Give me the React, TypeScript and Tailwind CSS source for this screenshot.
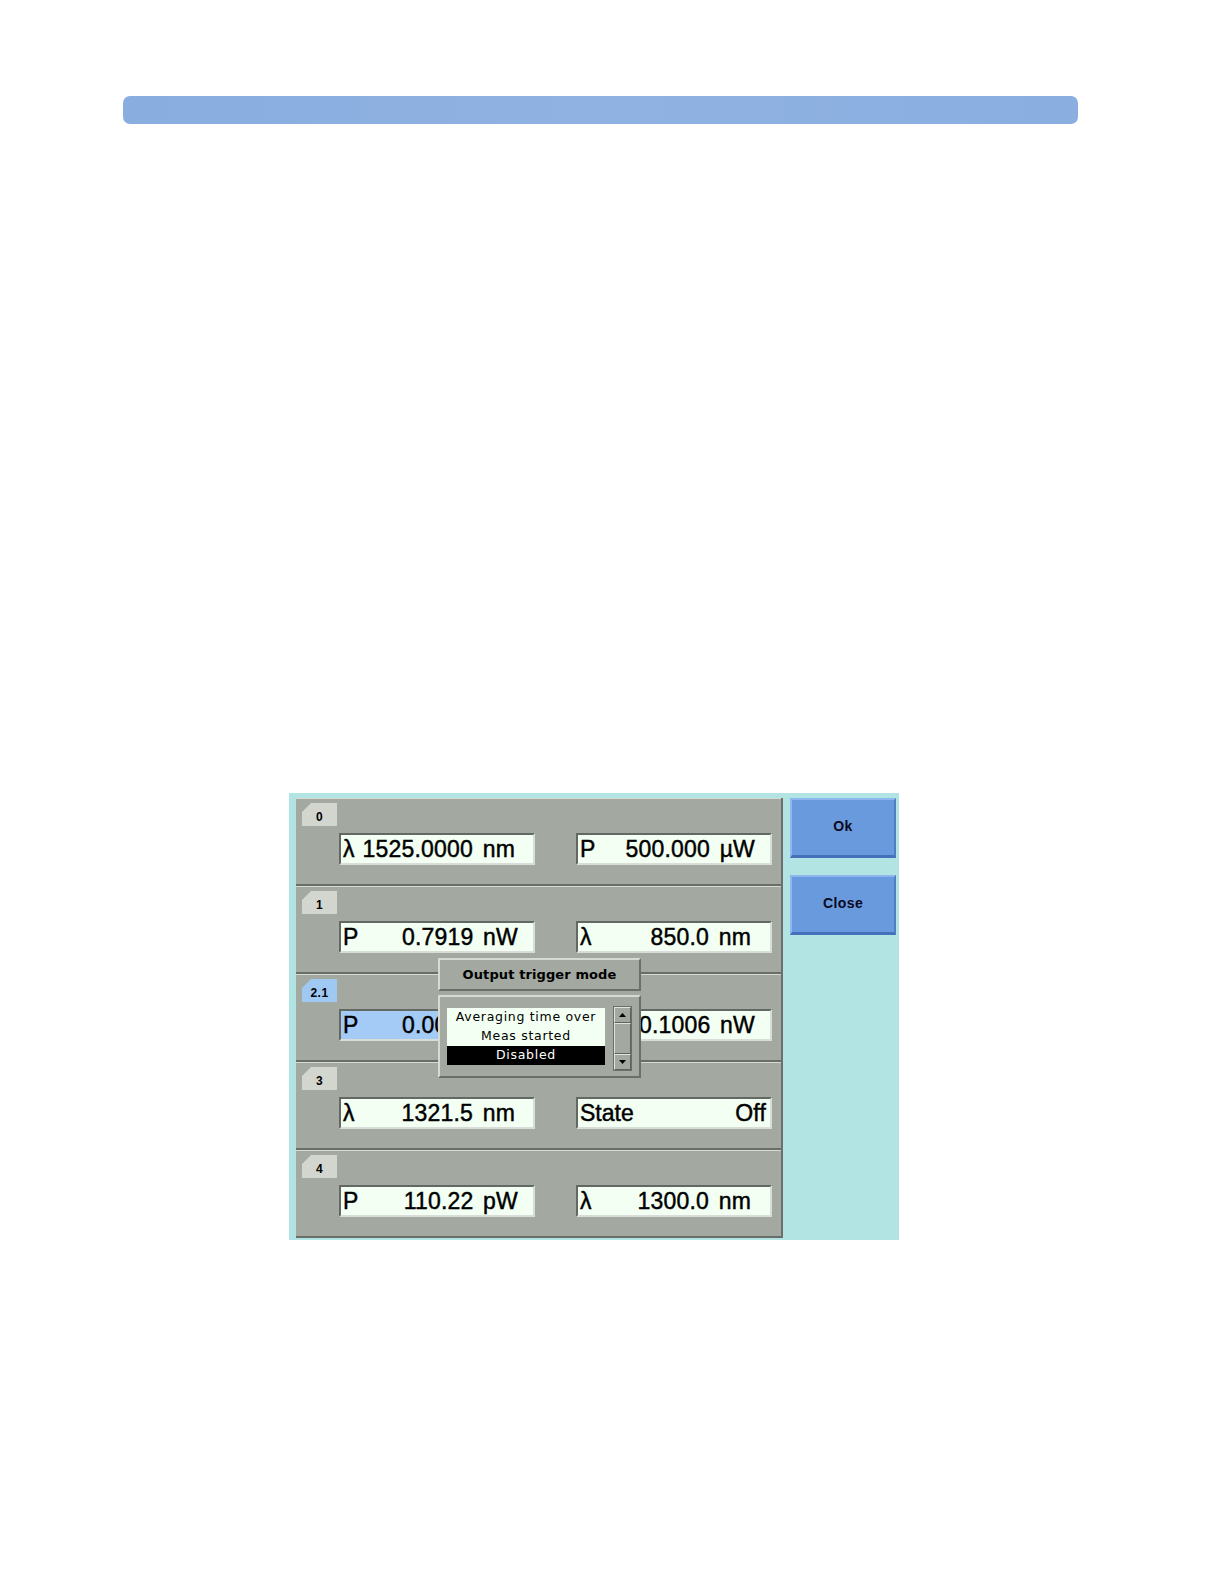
import React from 'react';

type Field = { label: string; value: string; pr?: string; active?: boolean };
type Row = { tab: string; active?: boolean; left: Field; right: Field };

const rows: Row[] = [
  { tab: '0', left: { label: 'λ', value: '1525.0000 nm', pr: 'pr-[18px]' }, right: { label: 'P', value: '500.000 µW' } },
  { tab: '1', left: { label: 'P', value: '0.7919 nW' }, right: { label: 'λ', value: '850.0 nm', pr: 'pr-[19px]' } },
  { tab: '2.1', active: true, left: { label: 'P', value: '0.0012 nW', active: true }, right: { label: 'P', value: '0.1006 nW' } },
  { tab: '3', left: { label: 'λ', value: '1321.5 nm', pr: 'pr-[18px]' }, right: { label: 'State', value: 'Off', pr: 'pr-[4px]' } },
  { tab: '4', left: { label: 'P', value: '110.22 pW' }, right: { label: 'λ', value: '1300.0 nm', pr: 'pr-[19px]' } },
];

function ValueField({ f }: { f: Field }) {
  return (
    <div
      className={
        'w-[196px] h-[32px] flex items-center justify-between pl-[2px] border-t-2 border-l-2 border-t-[#646862] border-l-[#646862] border-b-2 border-r-2 border-b-[#d9ddd7] border-r-[#d9ddd7] text-[23px] leading-none text-black [-webkit-text-stroke:0.45px_black] ' +
        (f.active ? 'bg-[#a4cbf6] ' : 'bg-[#f2fff2] ') +
        (f.pr ?? 'pr-[15px]')
      }
      style={{ fontFamily: '"Liberation Sans", Arial, sans-serif' }}
    >
      <span>{f.label}</span>
      <span className="tracking-[0.2px] [word-spacing:3px]">{f.value}</span>
    </div>
  );
}

function ChannelRow({ r }: { r: Row }) {
  return (
    <div className="h-[88px] border-t border-t-[#d6dad4] border-b-2 border-b-[#696d67] bg-[#a3a8a1] pt-[4px]">
      <div
        className={
          'ml-[6px] w-[35px] h-[23px] flex items-center justify-center text-[12px] font-bold text-black [clip-path:polygon(9px_0,100%_0,100%_100%,0_100%,0_9px)] ' +
          (r.active ? 'bg-[#9fc8f2]' : 'bg-[#d2d6ce]')
        }
        style={{ fontFamily: '"Liberation Sans", Arial, sans-serif' }}
      >
        <span className="mt-[5px] tracking-[0.5px]">{r.tab}</span>
      </div>
      <div className="flex gap-[41px] ml-[43px] mt-[7px]">
        <ValueField f={r.left} />
        <ValueField f={r.right} />
      </div>
    </div>
  );
}

function SideButton({ label }: { label: string }) {
  return (
    <button
      className="w-[106px] h-[60px] bg-[#6a9ade] border-t-2 border-l-2 border-t-[#8fb6ee] border-l-[#8fb6ee] border-b-[3px] border-r-2 border-b-[#4470bc] border-r-[#4f7cc6] text-[14px] font-bold text-[#0a0a20] tracking-[0.4px] pb-[2px]"
      style={{ fontFamily: '"Liberation Sans", Arial, sans-serif' }}
    >
      {label}
    </button>
  );
}

function TriggerPopup() {
  const dv = { fontFamily: '"DejaVu Sans", Verdana, sans-serif' };
  const bevel =
    'border-t border-l border-t-[#e0e4de] border-l-[#e0e4de] border-b border-r border-b-[#5f635d] border-r-[#5f635d]';
  return (
    <div className="absolute left-[149px] top-[165px] w-[203px]">
      <div
        className="h-[33px] bg-[#a3a8a1] border-t-2 border-l-2 border-t-[#d6dad4] border-l-[#d6dad4] border-b-2 border-r-2 border-b-[#6b6f69] border-r-[#6b6f69] flex items-center justify-center text-[13px] font-bold tracking-[0.1px] text-black"
        style={dv}
      >
        Output trigger mode
      </div>
      <div className="mt-[4px] h-[83px] bg-[#a3a8a1] border-t-2 border-l-2 border-t-[#d6dad4] border-l-[#d6dad4] border-b-2 border-r-2 border-b-[#6b6f69] border-r-[#6b6f69] flex items-start pt-[9px] pl-[7px]">
        <div className="w-[158px] mt-[2px] bg-[#f2fff2] text-[12.5px] tracking-[0.7px] text-black" style={dv}>
          <div className="h-[19px] flex items-center justify-center">Averaging time over</div>
          <div className="h-[19px] flex items-center justify-center">Meas started</div>
          <div className="h-[19px] flex items-center justify-center bg-black text-white">Disabled</div>
        </div>
        <div className="ml-[8px] w-[19px] h-[65px] flex flex-col border border-[#6b6f69] bg-[#a3a8a1]">
          <div className={'h-[16px] flex items-center justify-center ' + bevel}>
            <svg width="7" height="4" viewBox="0 0 7 4"><path d="M3.5 0 L7 4 L0 4 Z" fill="#000" /></svg>
          </div>
          <div className={'flex-1 ' + bevel} />
          <div className={'h-[16px] flex items-center justify-center ' + bevel}>
            <svg width="7" height="4" viewBox="0 0 7 4"><path d="M0 0 L7 0 L3.5 4 Z" fill="#000" /></svg>
          </div>
        </div>
      </div>
    </div>
  );
}

export default function App() {
  return (
    <div className="w-full min-h-screen bg-white pt-[96px] pb-[342px]">
      {/* top title bar */}
      <div className="ml-[123px] mr-[144px] h-[28px] rounded-[7px] bg-gradient-to-r from-[#8aade0] via-[#8fb2e2] to-[#8aaee0]" />

      {/* instrument screen */}
      <div className="relative ml-[289px] mt-[669px] w-[610px] h-[447px] bg-[#b2e4e4] flex">
        <div className="ml-[7px] mt-[5px] w-[487px] border-r-2 border-r-[#6c706a] self-start">
          {rows.map((r) => (
            <ChannelRow key={r.tab} r={r} />
          ))}
        </div>
        <div className="flex flex-col gap-[17px] ml-[7px] mt-[5px]">
          <SideButton label="Ok" />
          <SideButton label="Close" />
        </div>
        <TriggerPopup />
      </div>
    </div>
  );
}
